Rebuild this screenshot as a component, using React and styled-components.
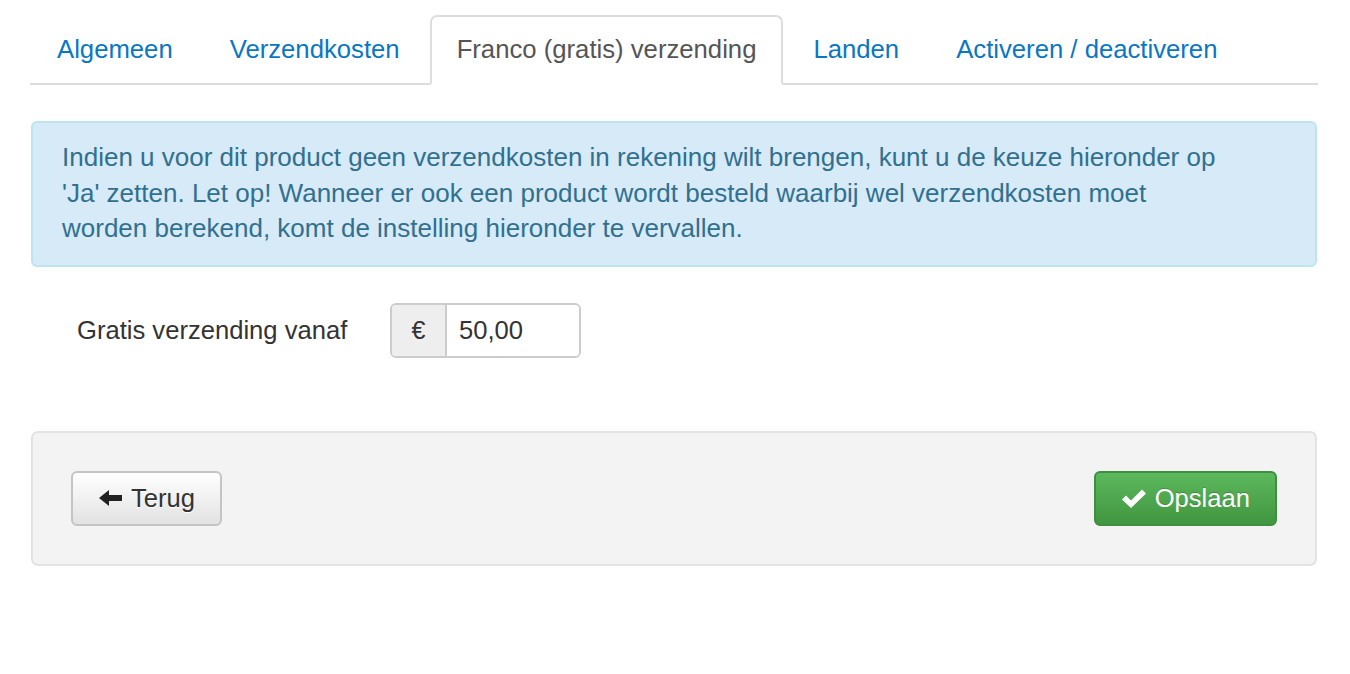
import styled, {createGlobalStyle} from "styled-components";

const GlobalStyle = createGlobalStyle`
  html, body {
    margin: 0;
    padding: 0;
    background: #FFFFFF;
    font-family: "Liberation Sans", Arial, sans-serif;
    color: #333333;
  }
`

const Page = styled.div`
  padding: 15px 32px 0 30px;
  display: flex;
  flex-direction: column;
`

const Tabs = styled.ul`
  display: flex;
  list-style: none;
  margin: 0;
  padding: 0;
  border-bottom: 2px solid #DDDDDD;
`

const Tab = styled.li`
  margin-right: 3px;
  margin-bottom: -2px;
  height: 70px;
  padding: 0 25px 2px;
  display: flex;
  align-items: center;
  box-sizing: border-box;
  font-size: 25.7px;
  border: 2px solid ${p => p.active ? '#DDDDDD' : 'transparent'};
  border-bottom-color: ${p => p.active ? '#FFFFFF' : 'transparent'};
  border-radius: 7px 7px 0 0;
  background: ${p => p.active ? '#FFFFFF' : 'transparent'};
  color: ${p => p.active ? '#555555' : '#0A77C2'};
  cursor: pointer;
`

const Alert = styled.div`
  margin-top: 36px;
  margin-left: 1px;
  margin-right: 1px;
  padding: 17px 80px 18px 29px;
  background: #D6EAF7;
  border: 2px solid #BCE5F0;
  border-radius: 6px;
  color: #31708F;
  font-size: 26px;
  line-height: 35.5px;
`

const FormRow = styled.div`
  display: flex;
  align-items: center;
  margin-top: 36px;
  padding-left: 47px;
`

const Label = styled.label`
  width: 313px;
  font-size: 25.6px;
  color: #333333;
`

const InputGroup = styled.div`
  display: flex;
  height: 55px;
  width: 191px;
  border: 2px solid #CCCCCC;
  border-radius: 6px;
  box-sizing: border-box;
  overflow: hidden;
`

const Addon = styled.span`
  width: 53px;
  display: flex;
  align-items: center;
  justify-content: center;
  background: #EEEEEE;
  border-right: 2px solid #CCCCCC;
  font-size: 25px;
  color: #333333;
`

const Input = styled.input`
  flex: 1;
  min-width: 0;
  border: none;
  outline: none;
  padding: 0 12px;
  font-family: inherit;
  font-size: 25.6px;
  color: #333333;
`

const Footer = styled.div`
  margin: 73px 1px 0;
  height: 135px;
  box-sizing: border-box;
  padding: 0 38px;
  display: flex;
  align-items: center;
  justify-content: space-between;
  background: #F3F3F3;
  border: 2px solid #E3E3E3;
  border-radius: 7px;
`

const Button = styled.button`
  height: 55px;
  display: flex;
  align-items: center;
  gap: 8px;
  padding: 0 25px;
  font-family: inherit;
  font-size: 25.6px;
  border-radius: 6px;
  cursor: pointer;
  ${p => p.primary ? `
    color: #FFFFFF;
    background: linear-gradient(#5CB85C, #419641);
    border: 2px solid #3E8F3E;
    text-shadow: 0 -1px 0 rgba(0,0,0,0.2);
  ` : `
    color: #333333;
    background: linear-gradient(#FFFFFF, #E2E2E2);
    border: 2px solid #C4C4C4;
    text-shadow: 0 1px 0 #FFFFFF;
  `}
`

const ArrowLeft = () => (
  <svg width="25" height="20" viewBox="0 0 25 20">
    <path d="M1 10 L11 2 L11 7 L24 7 L24 13 L11 13 L11 18 Z" fill="#222222"/>
  </svg>
)

const Check = () => (
  <svg width="26" height="22" viewBox="0 0 26 22">
    <path d="M1 12.5 L5 8.5 L10 13.5 L21 2.5 L25 6.5 L10 21 Z" fill="#FFFFFF"/>
  </svg>
)

const tabs = ['Algemeen', 'Verzendkosten', 'Franco (gratis) verzending', 'Landen', 'Activeren / deactiveren']

function App() {
  return (
    <Page>
      <GlobalStyle/>
      <Tabs>
        {tabs.map(t => (
          <Tab key={t} active={t === 'Franco (gratis) verzending'}>{t}</Tab>
        ))}
      </Tabs>
      <Alert>
        Indien u voor dit product geen verzendkosten in rekening wilt brengen, kunt u de keuze hieronder op
        'Ja' zetten. Let op! Wanneer er ook een product wordt besteld waarbij wel verzendkosten moet
        worden berekend, komt de instelling hieronder te vervallen.
      </Alert>
      <FormRow>
        <Label>Gratis verzending vanaf</Label>
        <InputGroup>
          <Addon>€</Addon>
          <Input defaultValue="50,00"/>
        </InputGroup>
      </FormRow>
      <Footer>
        <Button><ArrowLeft/>Terug</Button>
        <Button primary><Check/>Opslaan</Button>
      </Footer>
    </Page>
  );
}

export default App;
